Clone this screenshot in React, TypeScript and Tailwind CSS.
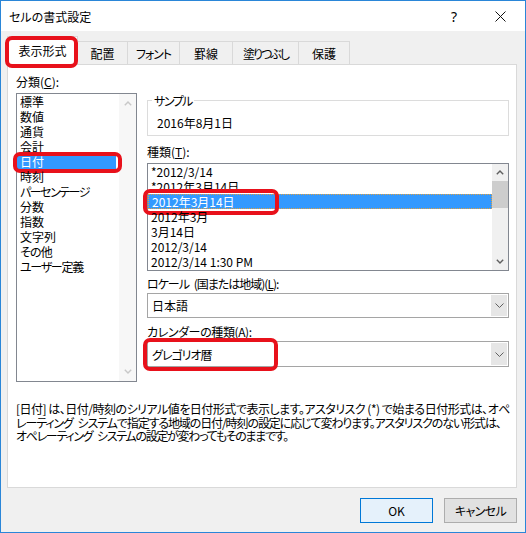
import React from "react";

const categories: { label: string; tr?: string }[] = [
  { label: "標準" },
  { label: "数値" },
  { label: "通貨" },
  { label: "会計" },
  { label: "日付" },
  { label: "時刻" },
  { label: "パーセンテージ", tr: "tracking-[-1.5px]" },
  { label: "分数" },
  { label: "指数" },
  { label: "文字列" },
  { label: "その他", tr: "tracking-[-0.8px]" },
  { label: "ユーザー定義", tr: "tracking-[-1.3px]" },
];

const types = [
  "*2012/3/14",
  "*2012年3月14日",
  "2012年3月14日",
  "2012年3月",
  "3月14日",
  "2012/3/14",
  "2012/3/14 1:30 PM",
];

const tabs = [
  { label: "配置", w: "w-[50px]", tr: "" },
  { label: "フォント", w: "w-[52px]", tr: "tracking-[-1px]" },
  { label: "罫線", w: "w-[53px]", tr: "" },
  { label: "塗りつぶし", w: "w-[66px]", tr: "tracking-[-2px]" },
  { label: "保護", w: "w-[51px]", tr: "" },
];

function Chevron({ up, color }: { up?: boolean; color: string }) {
  return (
    <svg width="8" height="5" viewBox="0 0 8 5">
      <polyline
        points={up ? "0.8,4.3 4,1 7.2,4.3" : "0.8,0.7 4,4 7.2,0.7"}
        fill="none"
        stroke={color}
        strokeWidth="1.4"
      />
    </svg>
  );
}

function ComboArrow() {
  return (
    <svg width="9" height="5" viewBox="0 0 9 5">
      <polyline points="0.5,0.5 4.5,4.5 8.5,0.5" fill="none" stroke="#606060" strokeWidth="1" />
    </svg>
  );
}

function RedBox({ className }: { className: string }) {
  return (
    <div
      className={`absolute border-[4px] border-[#e8111b] rounded-[7px] pointer-events-none ${className}`}
    />
  );
}

// a space that keeps its width when the line is tightened
function Gap() {
  return <span className="tracking-[2px]"> </span>;
}

function Combo({
  value,
  tr = "",
  children,
}: {
  value: string;
  tr?: string;
  children?: React.ReactNode;
}) {
  return (
    <div className="relative flex h-full border border-[#a5a5a5] bg-white">
      <div className={`flex-1 flex items-center pl-[4px] ${tr}`}>{value}</div>
      <div className="w-[16px] my-px mr-px bg-[#e6e6e6] flex items-center justify-center">
        <ComboArrow />
      </div>
      {children}
    </div>
  );
}

export default function App() {
  return (
    <div className="w-[526px] h-[533px] border border-[#2a86d8] bg-[#f0f0f0] flex flex-col text-[12px] text-black font-['Noto_Sans_CJK_JP','Noto_Sans',sans-serif] [font-feature-settings:'palt'] leading-[15px]">
      {/* title bar */}
      <div className="h-[30px] bg-white flex items-center pl-[8px] shrink-0">
        <span className="flex-1">セルの書式設定</span>
        <div className="w-[46px] h-[30px] flex items-center justify-center text-[14px] font-['Noto_Sans',sans-serif]">
          ?
        </div>
        <div className="w-[46px] h-[30px] mr-[2px] flex items-center justify-center">
          <svg width="11" height="11" viewBox="0 0 11 11">
            <path d="M0.5 0.5 L10.5 10.5 M10.5 0.5 L0.5 10.5" stroke="#111" strokeWidth="1" />
          </svg>
        </div>
      </div>

      <div className="flex-1 flex flex-col pl-[6px] pr-[8px]">
        {/* tabs */}
        <div className="h-[33px] flex items-end shrink-0">
          <div className="relative z-10 -mb-px h-[29px] w-[71px] bg-white border border-b-0 border-[#d9d9d9] flex items-center justify-center pb-[2px]">
            表示形式
            <RedBox className="-left-[3px] -top-[1px] w-[73px] h-[32px]" />
          </div>
          {tabs.map((t) => (
            <div
              key={t.label}
              className={`h-[23px] ${t.w} border-t border-r border-[#d9d9d9] flex items-center justify-center`}
            >
              <span className={t.tr}>{t.label}</span>
            </div>
          ))}
        </div>

        {/* panel */}
        <div className="h-[424px] shrink-0 border border-[#d9d9d9] bg-white pl-[8px] pt-[9px] flex flex-col">
          <div className="flex">
            {/* left column */}
            <div className="w-[121px] flex flex-col">
              <div className="h-[15px]">
                分類(<span className="underline">C</span>):
              </div>
              <div className="mt-[4px] h-[289px] border border-[#828790] flex">
                <div className="flex-1 flex flex-col">
                  {categories.map((c) => (
                    <div
                      key={c.label}
                      className={`relative h-[15px] pl-[3px] ${c.tr ?? ""} ${c.label === "日付" ? "bg-[#3399ff] text-white mr-[3px]" : ""}`}
                    >
                      {c.label}
                      {c.label === "日付" && (
                        <RedBox className="-left-[4px] -top-[2px] w-[109px] h-[21px]" />
                      )}
                    </div>
                  ))}
                </div>
                <div className="w-[17px] bg-[#f7f7f7] flex flex-col items-center justify-between py-[7px]">
                  <Chevron up color="#c8c8c8" />
                  <Chevron color="#c8c8c8" />
                </div>
              </div>
            </div>

            {/* right column */}
            <div className="ml-[10px] w-[362px] flex flex-col">
              <fieldset className="mt-[19px] h-[43px] border border-[#dcdcdc]">
                <legend className="ml-[4px] px-[2px] leading-[15px] tracking-[-1.5px]">サンプル</legend>
                <div className="pl-[9px] pt-[7px]">2016年8月1日</div>
              </fieldset>

              <div className="mt-[8px] h-[15px]">
                種類(<span className="underline">T</span>):
              </div>
              <div className="mt-[4px] h-[108px] border border-[#828790] flex">
                <div className="flex-1 flex flex-col">
                  {types.map((t, i) => (
                    <div
                      key={t}
                      className={`relative h-[15px] pl-[3px] ${i === 2 ? "bg-[#3399ff] text-white border border-dotted border-[#e0a040] leading-[13px]" : ""}`}
                    >
                      {t}
                      {i === 2 && <RedBox className="-left-[6px] -top-[6px] w-[136px] h-[26px]" />}
                    </div>
                  ))}
                </div>
                <div className="w-[16px] bg-[#f0f0f0] flex flex-col">
                  <div className="h-[17px] flex items-center justify-center">
                    <Chevron up color="#606060" />
                  </div>
                  <div className="h-[27px] bg-[#cdcdcd]" />
                  <div className="flex-1" />
                  <div className="h-[17px] flex items-center justify-center">
                    <Chevron color="#606060" />
                  </div>
                </div>
              </div>

              <div className="mt-[5px] h-[15px] tracking-[-1px]">
                ロケール<Gap />(国または地域)(<span className="underline">L</span>):
              </div>
              <div className="mt-[2px] h-[25px]">
                <Combo value="日本語" />
              </div>

              <div className="mt-[6px] h-[15px] tracking-[-0.4px]">
                カレンダーの種類(<span className="underline">A</span>):
              </div>
              <div className="mt-[2px] h-[26px]">
                <Combo value="グレゴリオ暦" tr="tracking-[-1px]">
                  <RedBox className="-left-[5px] -top-[4px] w-[135px] h-[33px]" />
                </Combo>
              </div>
            </div>
          </div>

          {/* description */}
          <div className="mt-[20px] leading-[13.5px] whitespace-nowrap">
            <div className="tracking-[-0.5px]">
              [日付] は、日付/時刻のシリアル値を日付形式で表示します。アスタリスク (*) で始まる日付形式は、オペ
            </div>
            <div className="tracking-[-1.1px]">
              レーティング<Gap />システムで指定する地域の日付/時刻の設定に応じて変わります。アスタリスクのない形式は、
            </div>
            <div className="tracking-[-1.3px]">
              オペレーティング<Gap />システムの設定が変わってもそのままです。
            </div>
          </div>
        </div>

        {/* buttons */}
        <div className="mt-[10px] flex justify-end gap-[11px]">
          <button className="w-[73px] h-[25px] border border-[#0078d7] bg-[#e5f1fb] flex items-center justify-center">
            OK
          </button>
          <button className="w-[73px] h-[25px] border border-[#adadad] bg-[#e1e1e1] flex items-center justify-center tracking-[-0.6px]">
            キャンセル
          </button>
        </div>
      </div>
    </div>
  );
}
